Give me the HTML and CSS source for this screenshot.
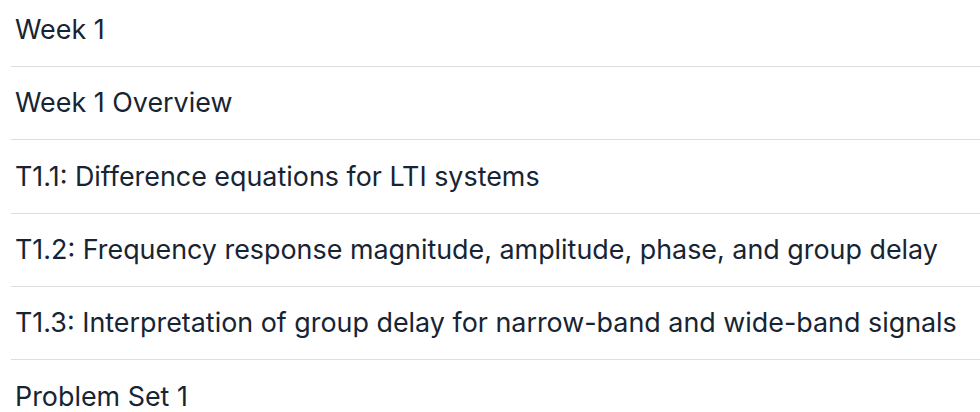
FILE: index.html
```html
<!DOCTYPE html>
<html lang="en">
<head>
<meta charset="utf-8">
<title>Week 1</title>
<link rel="stylesheet" href="styles.css">
</head>
<body>
<ul class="outline">
  <li class="item">Week 1</li>
  <li class="item">Week 1 Overview</li>
  <li class="item">T1.1: Difference equations for LTI systems</li>
  <li class="item">T1.2: Frequency response magnitude, amplitude, phase, and group delay</li>
  <li class="item">T1.3: Interpretation of group delay for narrow-band and wide-band signals</li>
  <li class="item">Problem Set 1</li>
</ul>
</body>
</html>
```
FILE: styles.css
```css
html, body {
  margin: 0;
  padding: 0;
  background: #ffffff;
}
body {
  font-family: Inter, "Noto Sans", sans-serif;
  color: #172433;
  overflow: hidden;
}
.outline {
  list-style: none;
  margin: -7.33px 0 0 11px;
  padding: 0;
}
.item {
  font-size: 26.88px;
  line-height: 36px;
  padding: 17.4px 4px 18.93px;
  border-top: 1px solid #dedede;
  white-space: nowrap;
}
.item:first-child {
  border-top: 1px solid transparent;
}
```
